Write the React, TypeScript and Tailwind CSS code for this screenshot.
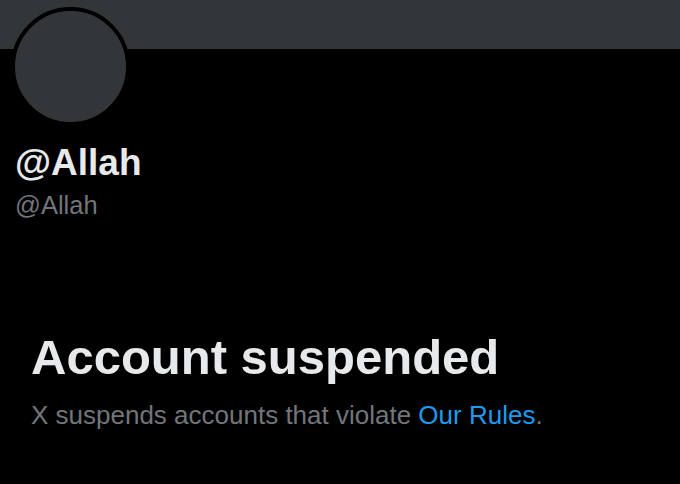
import React from 'react';

export default function App() {
  return (
    <div className="min-h-screen w-full bg-black font-['Liberation_Sans',Arial,sans-serif] overflow-hidden">
      {/* banner */}
      <div className="h-[49px] w-full bg-[#333639]" />

      {/* profile head */}
      <div className="px-[11px]">
        <div className="-mt-[42px] w-[119px] h-[119px] rounded-full border-[4px] border-black bg-[#333639]" />
      </div>

      <div className="pl-[15px] pt-[18px]">
        <h2 className="text-[37px] leading-none font-bold text-[#e7e9ea]">@Allah</h2>
        <p className="mt-[12px] text-[25.5px] leading-none text-[#71767b]">@Allah</p>
      </div>

      <div className="pl-[31px] pt-[114px]">
        <h1 className="text-[49px] leading-none font-bold text-[#e7e9ea]">Account suspended</h1>
        <p className="mt-[20px] text-[26px] leading-none text-[#71767b]">
          X suspends accounts that violate <span className="text-[#1d9bf0]">Our Rules</span>.
        </p>
      </div>
    </div>
  );
}
